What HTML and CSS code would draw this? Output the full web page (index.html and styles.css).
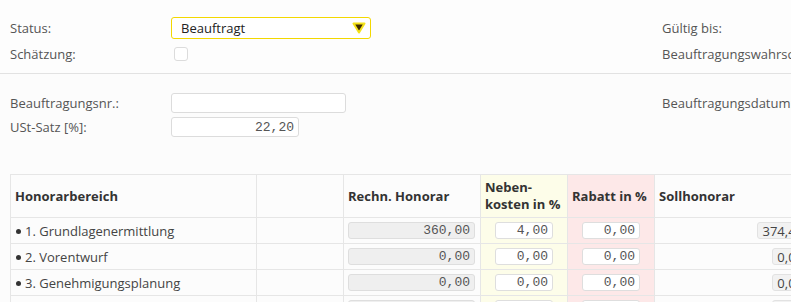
FILE: index.html
```html
<!DOCTYPE html>
<html lang="de">
<head>
  <meta charset="UTF-8">
  <title>Beauftragung</title>
  <link rel="stylesheet" href="styles.css">
</head>
<body>
  <div class="section section-top">
    <div class="form-grid">
      <label>Status:</label>
      <div class="select">
        <span>Beauftragt</span>
        <svg class="arrow" width="14" height="12" viewBox="0 0 14 12">
          <path d="M1.5 1.5 L12.5 1.5 L7 10.5 Z" fill="#3f2c00" stroke="#f4e21a" stroke-width="2" stroke-linejoin="round"/>
        </svg>
      </div>
      <label>Schätzung:</label>
      <div><span class="checkbox"></span></div>
    </div>
    <div class="side">
      <div class="side-row">Gültig bis:</div>
      <div class="side-row">Beauftragungswahrscheinlichkeit:</div>
    </div>
  </div>

  <div class="section section-mid">
    <div class="form-grid small">
      <label>Beauftragungsnr.:</label>
      <div><input class="text wide" type="text"></div>
      <label>USt-Satz [%]:</label>
      <div><input class="text num" type="text" value="22,20"></div>
    </div>
    <div class="side small">
      <div class="side-row">Beauftragungsdatum:</div>
    </div>
  </div>

  <table class="honorar">
    <colgroup>
      <col style="width:246px">
      <col style="width:87px">
      <col style="width:137px">
      <col style="width:87px">
      <col style="width:87px">
      <col style="width:158px">
      <col style="width:120px">
    </colgroup>
    <thead>
      <tr>
        <th>Honorarbereich</th>
        <th></th>
        <th>Rechn. Honorar</th>
        <th class="neben">Neben-<br>kosten in %</th>
        <th class="rabatt">Rabatt in %</th>
        <th>Sollhonorar</th>
        <th></th>
      </tr>
    </thead>
    <tbody>
      <tr>
        <td><span class="dot"></span>1. Grundlagenermittlung</td>
        <td></td>
        <td><input class="cell ro" type="text" value="360,00" readonly></td>
        <td class="neben"><input class="cell pct" type="text" value="4,00"></td>
        <td class="rabatt"><input class="cell pct" type="text" value="0,00"></td>
        <td class="soll"><span class="sum">374,40</span></td>
        <td></td>
      </tr>
      <tr>
        <td><span class="dot"></span>2. Vorentwurf</td>
        <td></td>
        <td><input class="cell ro" type="text" value="0,00" readonly></td>
        <td class="neben"><input class="cell pct" type="text" value="0,00"></td>
        <td class="rabatt"><input class="cell pct" type="text" value="0,00"></td>
        <td class="soll"><span class="sum">0,00</span></td>
        <td></td>
      </tr>
      <tr>
        <td><span class="dot"></span>3. Genehmigungsplanung</td>
        <td></td>
        <td><input class="cell ro" type="text" value="0,00" readonly></td>
        <td class="neben"><input class="cell pct" type="text" value="0,00"></td>
        <td class="rabatt"><input class="cell pct" type="text" value="0,00"></td>
        <td class="soll"><span class="sum">0,00</span></td>
        <td></td>
      </tr>
      <tr>
        <td><span class="dot"></span>4. Ausführungsplanung</td>
        <td></td>
        <td><input class="cell ro" type="text" value="0,00" readonly></td>
        <td class="neben"><input class="cell pct" type="text" value="0,00"></td>
        <td class="rabatt"><input class="cell pct" type="text" value="0,00"></td>
        <td class="soll"><span class="sum">0,00</span></td>
        <td></td>
      </tr>
    </tbody>
  </table>
</body>
</html>
```

FILE: styles.css
```css
html, body {
  margin: 0;
  padding: 0;
}
body {
  font-family: 'Open Sans', 'Liberation Sans', sans-serif;
  font-size: 13px;
  color: #555;
  background: #fcfcfc;
  width: 791px;
  height: 302px;
  overflow: hidden;
}
.section {
  display: flex;
  padding-left: 10px;
}
.section-top {
  padding-top: 15px;
  padding-bottom: 6px;
  border-bottom: 1px solid #e2e2e2;
  background: #fdfdfd;
}
.section-mid {
  padding-top: 17px;
  padding-bottom: 8px;
  margin-bottom: 27px;
}
.form-grid {
  flex: none;
  width: 652px;
  display: grid;
  grid-template-columns: 161px auto;
  grid-auto-rows: 26px;
  align-items: center;
}
.form-grid.small { grid-auto-rows: 24px; }
.form-grid label { white-space: nowrap; }
.side {
  flex: none;
  white-space: nowrap;
}
.side-row {
  height: 26px;
  line-height: 26px;
}
.side.small .side-row {
  height: 24px;
  line-height: 24px;
}
.select {
  width: 200px;
  height: 22px;
  box-sizing: border-box;
  border: 1px solid #f3d800;
  border-radius: 3px;
  background: #fff;
  display: flex;
  align-items: center;
  justify-content: space-between;
  padding: 0 4px 0 9px;
  color: #222;
}
.checkbox {
  display: block;
  margin-left: 3px;
  width: 14px;
  height: 14px;
  box-sizing: border-box;
  border: 1px solid #dcdcdc;
  border-radius: 3px;
  background: #fff;
}
input.text {
  box-sizing: border-box;
  height: 20px;
  border: 1px solid #dcdcdc;
  border-radius: 3px;
  background: #fff;
  padding: 0 4px;
  margin: 0;
  display: block;
}
input.wide { width: 175px; }
input.num {
  width: 128px;
  text-align: right;
  font-family: 'Liberation Mono', monospace;
  font-size: 13px;
  color: #555;
}
.honorar {
  margin-left: 10px;
  border-collapse: collapse;
  table-layout: fixed;
  width: 922px;
}
.honorar th, .honorar td {
  border: 1px solid #e6e6e6;
  padding: 0 4px;
  text-align: left;
  white-space: nowrap;
}
.honorar th {
  height: 42px;
  font-weight: bold;
  color: #333;
  line-height: 17px;
}
.honorar td {
  height: 25px;
  color: #444;
}
.dot {
  display: inline-block;
  width: 5px;
  height: 5px;
  border-radius: 50%;
  background: #333;
  margin: 0 4px 2px 1px;
  vertical-align: middle;
}
.honorar .neben { background: #fdfde9; }
.honorar .rabatt { background: #fde8e8; }
input.cell {
  box-sizing: border-box;
  height: 17px;
  border: 1px solid #dedede;
  border-radius: 3px;
  padding: 0 4px;
  margin: 0;
  display: block;
  text-align: right;
  font-family: 'Liberation Mono', monospace;
  font-size: 13px;
  color: #555;
  background: #fff;
}
input.ro {
  width: 127px;
  background: #efefef;
}
input.pct {
  width: 58px;
  margin-left: 10px;
}
.honorar td.soll { text-align: right; }
.sum {
  display: inline-block;
  height: 17px;
  line-height: 16px;
  box-sizing: border-box;
  border: 1px solid #e2e2e2;
  border-radius: 3px;
  background: #f2f2f2;
  padding: 0 4px;
  color: #444;
}
```
